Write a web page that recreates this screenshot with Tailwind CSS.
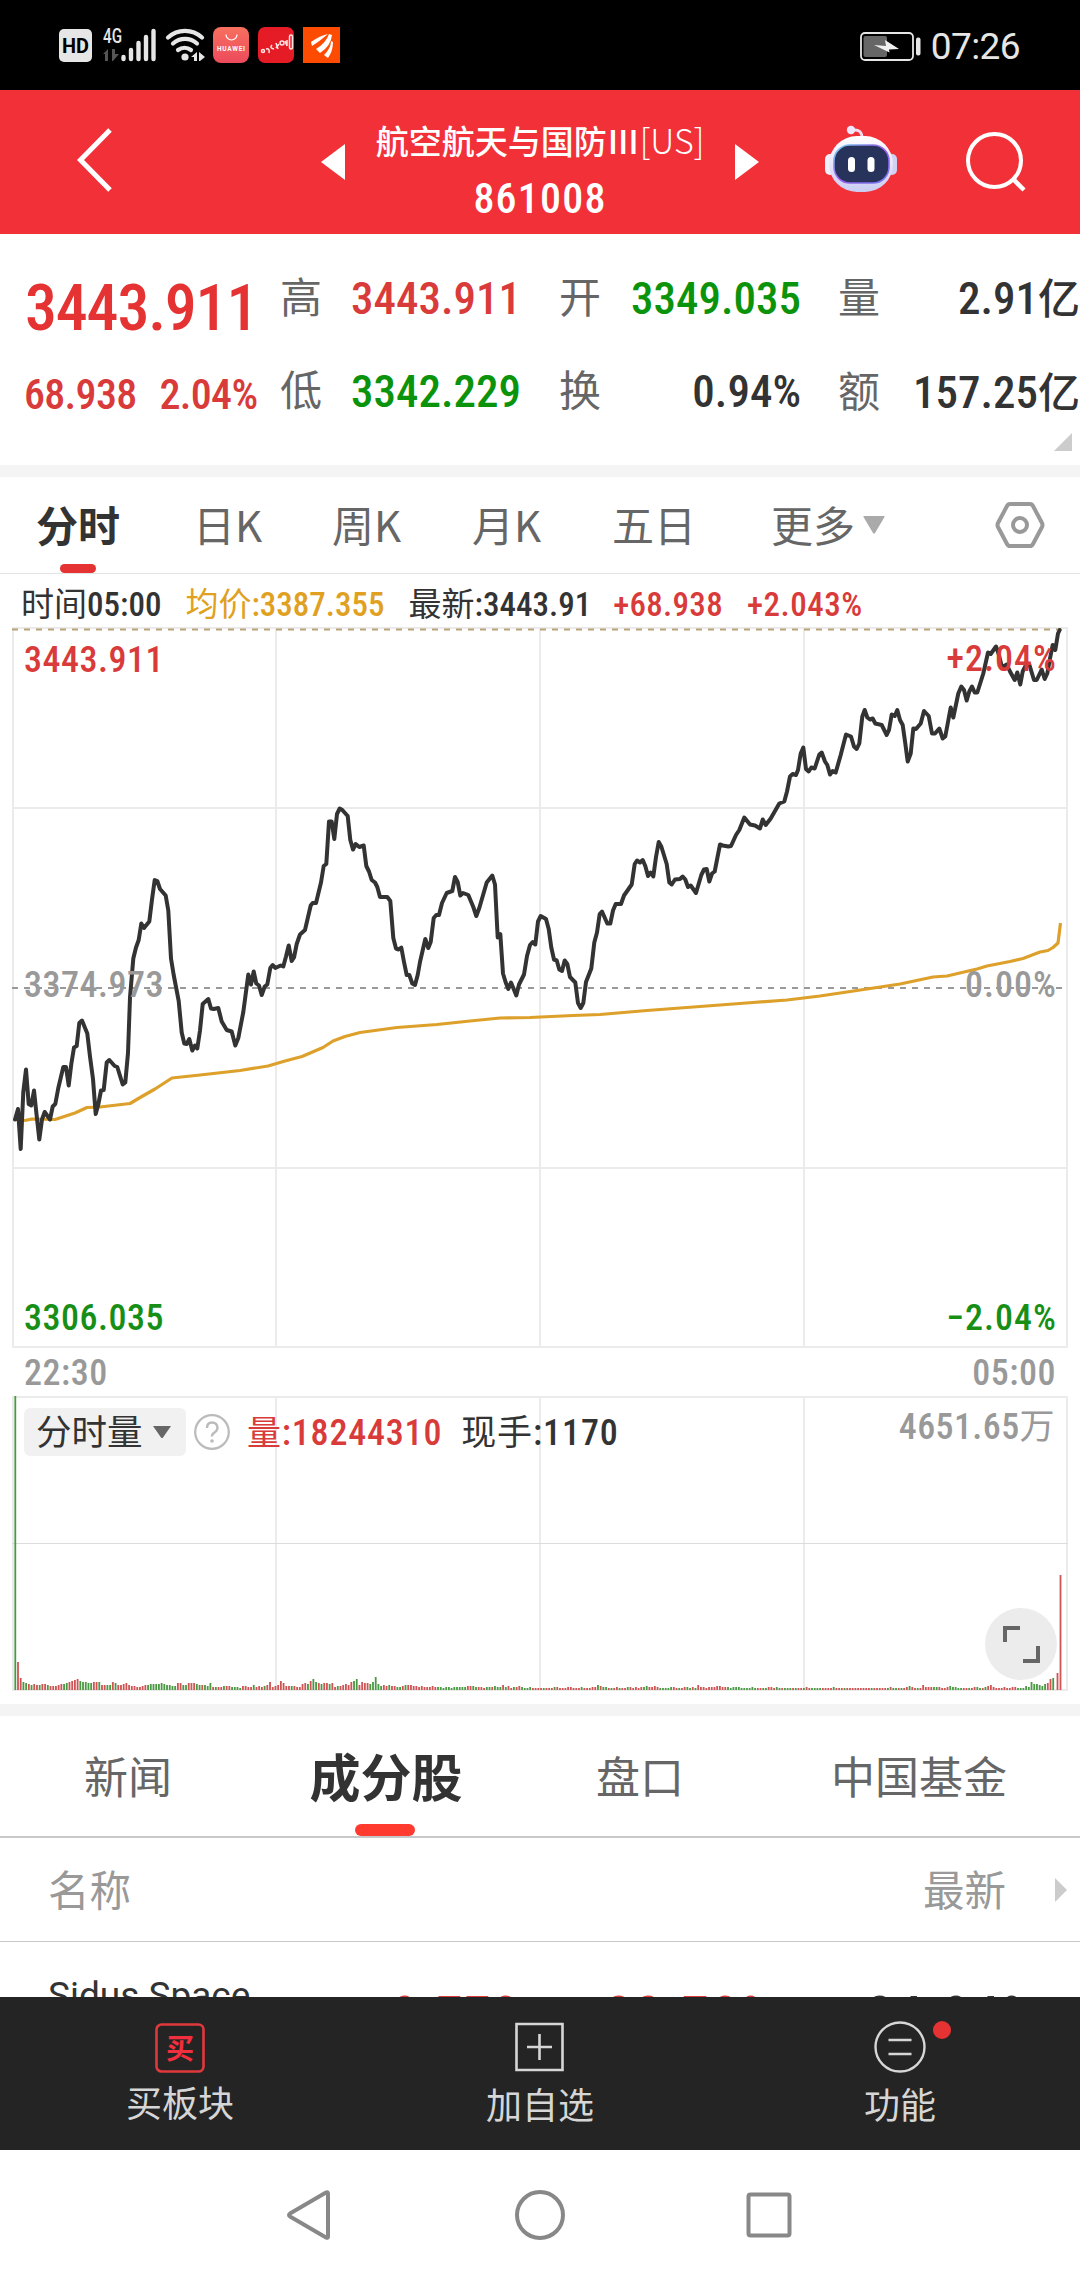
<!DOCTYPE html>
<html lang="zh-CN">
<head>
    <meta charset="UTF-8">
    <meta name="viewport" content="width=device-width, initial-scale=1.0">
    <title>航空航天与国防Ⅲ 861008</title>
    <script src="https://cdn.jsdelivr.net/npm/@tailwindcss/browser@4"></script>
</head>
<body class="w-[1080px] h-[2280px] overflow-hidden bg-white text-[#333] font-['Roboto','Noto_Sans_CJK_SC',sans-serif] whitespace-nowrap">

    <!-- status bar -->
    <div class="h-[90px] bg-black flex items-center">
        <svg class="w-[360px] h-[90px]" viewBox="0 0 360 90">
            <rect x="59" y="29" width="33" height="33" rx="5" fill="#e6e6e6"/>
            <text x="75.5" y="53" font-size="20" font-weight="700" text-anchor="middle" textLength="27" lengthAdjust="spacingAndGlyphs" fill="#000">HD</text>
            <text x="103" y="43" font-size="20" font-weight="500" textLength="19" lengthAdjust="spacingAndGlyphs" fill="#e6e6e6">4G</text>
            <path d="M103 54l5-5v12h-3v-7zM112 49h3v5h4l-6 7h-1z" fill="#555"/>
            <g stroke="#e6e6e6" stroke-width="4.4" stroke-linecap="round">
                <path d="M123.500 57v2M131 50v9M138.500 43v16M146 37v22M153.500 31v28"/>
            </g>
            <g fill="none" stroke="#e6e6e6" stroke-width="4.200" stroke-linecap="round">
                <path d="M168 37.500a25 25 0 0 1 34 0M173 43.500a18 18 0 0 1 24 0M178 50a11 11 0 0 1 13 0"/>
            </g>
            <circle cx="185" cy="57" r="3.600" fill="#e6e6e6"/>
            <path d="M191 57l6-5v9h-3v-4zM199 52l6 5-5 4h-1z" fill="#e6e6e6"/>
            <!-- app icons -->
            <linearGradient id="hw" x1="0" y1="0" x2="0" y2="1"><stop offset="0" stop-color="#f8705f"/><stop offset="1" stop-color="#ec4a5c"/></linearGradient>
            <rect x="213" y="27" width="36" height="36" rx="8" fill="url(#hw)"/>
            <path d="M226 34.500a5.500 5.500 0 0 0 11 0" fill="none" stroke="#fff" stroke-width="1.200"/>
            <text x="231" y="51" font-size="6.500" font-weight="700" text-anchor="middle" textLength="28" fill="#fff">HUAWEI</text>
            <rect x="258" y="27" width="36" height="36" rx="7" fill="#e51c26"/>
            <g fill="none" stroke="#ffe3e3" stroke-width="1.500">
                <circle cx="263" cy="51" r="1.500"/><path d="M266 49q4-1 3 4M272 45q-3 3 2 4M276 43l2 6M279 44l-3 4"/><circle cx="282" cy="43" r="2"/><path d="M285 41l2 5M287 40v6"/><rect x="289.500" y="35" width="3" height="14" rx="1.500"/>
            </g>
            <rect x="303" y="27" width="37" height="36" fill="#fd4b02"/>
            <path d="M311 42q10-7 17-8q-8 7-16 12zM316 49q10-6 13-15l3 1q-1 11-12 18zM324 55q7-7 7-14l2 1q0 9-5 16z" fill="#fff"/>
        </svg>
        <div class="ml-auto mr-[60px] flex items-center gap-[9px] pt-[3px]">
            <svg class="w-[62px] h-[32px]" viewBox="860 30 62 32">
                <rect x="861" y="32" width="52" height="27" rx="4" fill="none" stroke="#e6e6e6" stroke-width="1.800"/>
                <rect x="863.500" y="35" width="23.500" height="21" rx="2" fill="#666"/>
                <rect x="916" y="36.500" width="4.500" height="18" rx="2" fill="#e6e6e6"/>
                <path d="M874 44l12 1-1-6 14 9-10 .5.500 3z" fill="#f0f0f0"/>
            </svg>
            <span class="text-[37px] leading-[40px] text-[#e6e6e6] font-normal tracking-[-0.6px]">07:26</span>
        </div>
    </div>

    <!-- title bar -->
    <div class="h-[144px] bg-[#f23037] flex items-center text-white">
        <svg class="w-[36px] h-[66px] ml-[77px] mt-[-5px]" viewBox="0 0 36 66"><path d="M33 3L3.500 33 33 63" fill="none" stroke="#fff" stroke-width="5"/></svg>
        <svg class="w-[24px] h-[36px] ml-[208px]" viewBox="0 0 24 36"><path d="M24 0v36L0 18z" fill="#fff"/></svg>
        <div class="w-[390px] flex flex-col items-center pt-[20px]">
            <div class="text-[33px] leading-[50px] mt-[-2px] flex"><span class="font-medium">航空航天与国防Ⅲ</span><span class="font-['Noto_Sans_CJK_SC'] font-light text-[34px] mt-[-3px]">[US]</span></div>
            <div class="text-[42px] leading-[50px] mt-[6px] font-medium font-stretch-condensed tracking-[1.2px]">861008</div>
        </div>
        <svg class="w-[24px] h-[36px]" viewBox="0 0 24 36"><path d="M0 0v36l24-18z" fill="#fff"/></svg>
        <svg class="w-[74px] h-[70px] ml-[65px] mt-[-6px]" viewBox="824 124 74 70">
            <defs>
                <linearGradient id="head" x1="0" y1="0" x2="0" y2="1"><stop offset="0" stop-color="#fff"/><stop offset=".6" stop-color="#e4def8"/><stop offset="1" stop-color="#c9cdf2"/></linearGradient>
                <linearGradient id="rim" x1="0" y1="0" x2="1" y2="1"><stop offset="0" stop-color="#6fd3ee"/><stop offset=".5" stop-color="#9b59e8"/><stop offset="1" stop-color="#6f7cf0"/></linearGradient>
            </defs>
            <path d="M862 138q0-9-9-8" fill="none" stroke="#f3dcf0" stroke-width="3"/>
            <circle cx="851" cy="130" r="4.200" fill="#f1e6fb"/>
            <rect x="825" y="154" width="10" height="21" rx="5" fill="#eef0fc"/>
            <rect x="887" y="154" width="10" height="21" rx="5" fill="#cfd2f4"/>
            <rect x="829" y="136" width="64" height="56" rx="28" fill="url(#head)"/>
            <rect x="834" y="145" width="55" height="38" rx="16" fill="#27335b" stroke="url(#rim)" stroke-width="1.600"/>
            <rect x="848" y="157" width="7" height="15" rx="3.500" fill="#fff"/>
            <rect x="867.500" y="157" width="7" height="15" rx="3.500" fill="#fff"/>
        </svg>
        <svg class="w-[62px] h-[62px] ml-[67px] mt-[-1px]" viewBox="965 131 62 62">
            <circle cx="994.500" cy="160.500" r="26.500" fill="none" stroke="#fff" stroke-width="4"/>
            <path d="M1013 179l11 11" stroke="#fff" stroke-width="4.500"/>
        </svg>
    </div>

    <!-- quote -->
    <div class="h-[231px] flex relative font-medium font-stretch-condensed">
        <div class="w-[281px] pl-[25px] pt-[32px] text-[#e53232]">
            <div class="h-[86px] leading-[86px] text-[64px] tracking-[-1.2px]">3443.911</div>
            <div class="h-[86px] leading-[86px] text-[42px] text-[#d93a3a] tracking-[-0.7px] ml-[-1px] flex gap-[23px]"><span>68.938</span><span>2.04%</span></div>
        </div>
        <div class="w-[279px] pr-[39px] pt-[18px] text-[45px] leading-[93px]">
            <div class="flex justify-between"><span class="text-[42px] font-normal text-[#666] ml-[-1px]">高</span><span class="text-[#d93a3a]">3443.911</span></div>
            <div class="flex justify-between"><span class="text-[42px] font-normal text-[#666] ml-[-1px]">低</span><span class="text-[#0b930b]">3342.229</span></div>
        </div>
        <div class="w-[279px] pr-[38px] pt-[18px] text-[45px] leading-[93px]">
            <div class="flex justify-between"><span class="text-[42px] font-normal text-[#666] ml-[-1px]">开</span><span class="text-[#0b930b]">3349.035</span></div>
            <div class="flex justify-between"><span class="text-[42px] font-normal text-[#666] ml-[-1px]">换</span><span>0.94%</span></div>
        </div>
        <div class="w-[241px] pt-[18px] text-[45px] leading-[93px]">
            <div class="flex justify-between"><span class="text-[42px] font-normal text-[#666] ml-[-1px]">量</span><span>2.91<span class="text-[42px]">亿</span></span></div>
            <div class="flex justify-between"><span class="text-[42px] font-normal text-[#666] ml-[-1px]">额</span><span>157.25<span class="text-[42px]">亿</span></span></div>
        </div>
        <svg class="absolute right-[8px] bottom-[14px] w-[18px] h-[18px]" viewBox="0 0 18 18"><path d="M18 0v18H0z" fill="#ccc"/></svg>
    </div>
    <div class="h-[12px] bg-[#f4f4f4]"></div>

    <!-- period tabs -->
    <div class="h-[97px] border-b border-[#e4e4e4] flex items-center pl-[36px] pb-[3px] text-[42px] leading-[60px] text-[#666] font-['Noto_Sans_CJK_SC',sans-serif]">
        <div class="w-[157px] relative font-bold text-[#333]">分时<span class="absolute left-[24px] top-[70px] w-[36px] h-[9px] rounded-full bg-[#e53232]"></span></div>
        <div class="w-[139px]">日K</div>
        <div class="w-[140px]">周K</div>
        <div class="w-[140px]">月K</div>
        <div class="w-[159px]">五日</div>
        <div>更多</div>
        <svg class="w-[22px] h-[18px] ml-[8px] mt-[3px]" viewBox="0 0 22 18"><path d="M1 0h20q1 0 .5 1L12 17q-1 1.500-2 0L.5 1Q0 0 1 0z" fill="#aaa"/></svg>
        <svg class="w-[50px] h-[50px] ml-[110px] mt-[3px]" viewBox="0 0 50 50" fill="none" stroke="#999" stroke-width="4">
            <path d="M15 4h20q2 0 3 2l9 17q1 2 0 4l-9 17q-1 2-3 2H15q-2 0-3-2L3 27q-1-2 0-4l9-17q1-2 3-2z"/>
            <circle cx="25" cy="25" r="7"/>
        </svg>
    </div>

    <!-- price line -->
    <div class="h-[53px] pt-[8px] pl-[21px] flex gap-[24px] text-[33px] leading-[46px] font-medium font-stretch-condensed">
        <span><span class="font-normal">时间</span>05:00</span>
        <span class="text-[#e0a020]"><span class="font-normal">均价</span>:3387.355</span>
        <span class="mr-[-2px]"><span class="font-normal">最新</span>:3443.91</span>
        <span class="text-[#d93a3a] tracking-[0.3px]">+68.938</span>
        <span class="text-[#d93a3a] tracking-[0.5px]">+2.043%</span>
    </div>

    <!-- intraday chart -->
    <svg class="block w-[1080px] h-[767px] font-medium font-stretch-condensed tracking-[0.5px]" viewBox="0 627 1080 767" font-size="36">
        <g stroke="#ebebeb" stroke-width="2" fill="none">
            <path d="M12 628h1056M12 808h1056M12 1168h1056M12 1347h1056M13 627v721M276 627v721M540 627v721M804 627v721M1067 627v721"/>
        </g>
        <path d="M12 629.500h1049" stroke="#b8a27a" stroke-width="2" stroke-dasharray="6 6"/>
        <path d="M12 988h1051" stroke="#999" stroke-width="1.800" stroke-dasharray="6 6"/>
        <text x="24" y="671.500" fill="#d93a3a">3443.911</text>
        <polyline fill="none" stroke="#dda02a" stroke-width="3.200" stroke-linejoin="round" points="15,1119.5 25,1120.5 32,1119 55,1119.5 75,1113 87,1107.5 100,1107 130,1103.5 141,1097 155,1089 172,1078 200,1075 240,1070.5 268,1066 285,1061 302,1056.5 323,1047.5 333,1041 345,1036.5 360,1032.5 397,1027.5 437,1024.5 470,1021 500,1018 530,1017.5 573,1015.5 600,1014.5 647,1010.5 720,1005 753,1002.5 787,1000 820,996 867,989 900,984 933,977 947,976 977,969 987,966 1010,961.5 1023,958.5 1040,952 1048,950.5 1053,947.5 1058,943 1060.5,923"/>
        <polyline fill="none" stroke="#333" stroke-width="4" stroke-linejoin="round" stroke-linecap="round" points="15,1119.5 18,1109 20.7,1149 23.3,1092 26,1069.5 28.7,1104 31.3,1105.5 34,1090.5 36.7,1116 39.3,1139.5 42,1119.5 44.7,1112 50,1119.5 52.7,1106.5 55.3,1104 58.3,1088 63.3,1067 66,1067 68.7,1085.5 71.3,1064 74,1047.5 76.7,1046 79.3,1023 82,1020.5 87.3,1033.5 90,1056.5 93,1079 95.7,1114 98.3,1104.5 101,1090.5 103.7,1090 106.7,1062.5 109.3,1060 114.7,1066 117.3,1067 122.7,1084.5 125.3,1082.5 128,1053 130,997.5 133.3,958.5 136,947.5 138.7,940 141.3,923.5 144,928 149.3,921.5 152,899.5 154.7,880 157.3,881 160,889 165.7,895.5 168.3,910.5 171,958.5 173.7,975 178.7,1001 181.7,1032.5 184.3,1043.5 186.7,1044 189.3,1039 192.3,1050.5 195,1045.5 197.3,1048.5 200,1030.5 202.7,1004 208.3,999 211,1008.5 213.7,1009 218.3,1008 221.7,1021.5 226.7,1030 231.7,1031.5 235.3,1045.5 238.3,1038 243.3,1012 248.3,974.5 251,984.5 253.7,971.5 256.3,983.5 259,985.5 261.7,995 264.7,986.5 267.3,984.5 270.3,968 272.7,965 275.3,968 280.7,965.5 283.3,966.5 286,956.5 288.7,945.5 291.7,961 294,957.5 296.7,944 300,934.5 305,930 310.7,905.5 312.7,903 316,903 321,882.5 323.7,866 326.3,864 329,821.5 331.7,821.5 334.3,839 337,814 339.7,808.5 342.3,810 347.7,816 350.3,840 353,849.5 355.7,844 359.3,847 363.7,845.5 366.3,866 369,871.5 371.7,880 375,882.5 377.3,887 380,897 387.3,897 390.3,901 393.3,938 396,948.5 398.7,949.5 401.3,947.5 404,962 406.7,975 409.3,975 412.3,983.5 415,985 417.7,975 420,962 425.3,939 428.3,948 430.7,942 433.7,918 436.3,915 439,915 442,903 446.7,893 452.3,891 455,877 457.7,882 460.3,895.5 463,893 468.3,895 473.3,907 476.3,916 479.3,908 486.7,882.5 492.3,875.5 495,884.5 497.7,937.5 500.3,934 503,973.5 505.7,982.5 508.3,989 511,982.5 513.7,989 516.3,995.5 519,984.5 524,974.5 527,956 530,945 532.7,942 535.3,944.5 538,921.5 540.7,916 546,919 548.7,929 551.3,947.5 554,959.5 556.7,960.5 559.3,969.5 562,971 564.7,960.5 567.3,964 570,977 575.3,982.5 578,1003 580.7,1008 583.3,1003 586,982 591.3,968.5 594.3,942.5 597,932.5 599.7,914 602,911.5 607.3,923.5 610.3,923.5 613,910.5 615.7,904 621,904 624,895.5 631.7,884.5 634.7,864 637,860.5 640,862.5 642.7,860 645.3,866 648,876 650.7,872.5 653.3,876.5 656,857 658.7,842 661.3,846.5 666.7,864 669.3,882.5 671.7,884.5 675,879.5 680,879 682.7,876.5 685.3,879.5 688,887 690.7,885.5 696,893 701.3,875 704,869.5 706.7,869 709.3,881.5 712,873.5 714.7,871.5 720,844.5 722.7,845.5 728.3,846.5 731,846 736,835 739.3,830 744.3,817.5 750,824.5 755,825.5 760,828.5 762.7,819.5 765.7,825 770.7,818.5 779.3,803.5 784.3,801.5 787,791.5 790,776.5 792.7,774 796,775 798,770 800.7,753.5 803.3,747.5 806,769 808.7,771.5 811.3,767.5 814.7,768.5 819.3,754.5 821.7,752.5 825,761.5 827.3,765 830,774.5 832.7,771 835.7,772.5 840.7,755 846,734.5 851,736.5 854,746.5 856.7,749 859.3,743.5 862.3,716.5 864.7,710 867.3,717.5 870,719.5 872.7,718.5 875.3,723.5 881.7,725 886.7,735 889,730 891.7,714.5 894.7,716 897.3,710 900,720 902.7,725 905.3,743.5 907.7,761.5 910.7,753.5 913.3,728.5 916,729 920.7,723.5 924,711 928.7,716 932,733.5 935,733.5 939.3,728.5 942.7,738.5 945.3,736.5 950.7,707.5 953.3,717.5 958.3,693.5 961.3,686.5 964,690 966.7,700.5 969.3,691.5 972,686.5 974.7,692.5 977.3,692.5 983.3,673.5 988,652.5 990.7,654 996,646.5 998.7,654 1002,667.5 1006.7,664.5 1010,671.5 1014.7,680 1017.3,672.5 1020.3,684.5 1022.7,671.5 1026,665 1029.3,664.5 1034,680 1036.7,680 1041.7,669.5 1044.7,679 1047.3,673.5 1050,658.5 1052.7,645 1055.3,650 1058,633.5 1059.7,630"/>
        <text x="1057" y="671" text-anchor="end" letter-spacing="1" fill="#d93a3a">+2.04%</text>
        <text x="24" y="996.500" fill="#999">3374.973</text>
        <text x="1057" y="996.500" text-anchor="end" letter-spacing="1" fill="#999">0.00%</text>
        <text x="24" y="1330" fill="#178f17">3306.035</text>
        <text x="1057" y="1330" text-anchor="end" letter-spacing="1" fill="#178f17">−2.04%</text>
        <text x="24" y="1385" fill="#999">22:30</text>
        <text x="1056" y="1385" text-anchor="end" fill="#999">05:00</text>
    </svg>

    <!-- volume chart -->
    <div class="relative h-[310px] pt-[14px] font-medium font-stretch-condensed">
        <svg class="absolute left-0 top-0 w-[1080px] h-[300px]" viewBox="0 1394 1080 300">
            <g stroke="#ebebeb" stroke-width="2" fill="none">
                <path d="M12 1397h1056M13 1396v294M276 1396v294M540 1396v294M804 1396v294M1067 1396v294M12 1690h1056"/>
            </g>
            <path d="M12 1543.500h1056" stroke="#dcdcdc"/>
            <g id="bars"></g>
        </svg>
        <div class="relative flex items-start pl-[24px] pr-[25px] text-[36px] leading-[50px]">
            <div class="w-[162px] h-[48px] rounded-[6px] bg-[#f1f1f1] pl-[12px] pt-[2px] flex items-center font-normal text-[35.5px]">分时量
                <svg class="w-[18px] h-[12px] ml-[10px] mt-[-2px]" viewBox="0 0 18 12"><path d="M0 0h18l-8 11.500q-1 1-2 0z" fill="#666"/></svg>
            </div>
            <svg class="w-[36px] h-[36px] ml-[8px] mt-[6px]" viewBox="0 0 36 36">
                <circle cx="18" cy="18" r="16.800" fill="none" stroke="#bbb" stroke-width="2.200"/>
                <path d="M13 14q0-5.500 5-5.500t5.500 5q0 3-3 5t-2.500 4" fill="none" stroke="#bbb" stroke-width="2.400"/>
                <circle cx="18" cy="27" r="1.800" fill="#bbb"/>
            </svg>
            <span class="ml-[17px] text-[#d93a3a] tracking-[0.8px]"><span class="font-normal text-[34px]">量</span>:18244310</span>
            <span class="ml-[19px] tracking-[0.9px]"><span class="font-normal text-[35px]">现手</span>:1170</span>
            <span class="ml-auto mt-[-6px] text-[#999] tracking-[0.4px]">4651.65<span class="font-normal text-[35px]">万</span></span>
        </div>
        <svg class="absolute left-[985px] top-[214px] w-[72px] h-[72px]" viewBox="0 0 72 72">
            <circle cx="36" cy="36" r="36" fill="#ececec"/>
            <path d="M20 34V20h15M38 53h15V38" fill="none" stroke="#666" stroke-width="4"/>
        </svg>
    </div>
    <div class="h-[12px] bg-[#f4f4f4]"></div>

    <!-- section tabs -->
    <div class="h-[122px] border-b-2 border-[#c8c8c8] relative flex items-center pb-[2px] text-[44px] leading-[60px] text-[#666] font-['Noto_Sans_CJK_SC',sans-serif]">
        <div class="w-[256px] text-center">新闻</div>
        <div class="w-[260px] text-center text-[51px] font-bold text-[#333]">成分股</div>
        <div class="w-[248px] text-center">盘口</div>
        <div class="w-[310px] text-center">中国基金</div>
        <div class="absolute left-[355px] bottom-0 w-[60px] h-[12px] rounded-full bg-[#ff3b30]"></div>
    </div>
    <div class="h-[104px] border-b border-[#c8c8c8] flex items-center pl-[48px] text-[41.5px] leading-[60px] text-[#999]">
        <span class="mt-[5px]">名称</span>
        <span class="mt-[5px] ml-auto mr-[49px]">最新</span>
        <svg class="w-[12px] h-[24px] mr-[13px]" viewBox="0 0 12 24"><path d="M0 0v24l12-12z" fill="#ccc"/></svg>
    </div>
    <!-- first stock, cut off by the toolbar -->
    <div class="h-[55px] overflow-hidden relative pl-[48px] flex items-start">
        <span class="w-[344px] text-[37px] leading-[44px] pt-[32px]">Sidus Space</span>
        <span class="w-[213px] text-[52px] leading-[60px] pt-[44px] font-medium font-stretch-condensed tracking-[2px] text-[#d93a3a]">9.770</span>
        <span class="w-[261px] text-[54px] leading-[60px] pt-[44px] font-medium font-stretch-condensed tracking-[2.6px] text-[#d93a3a]">22.70%</span>
        <span class="text-[54px] leading-[60px] pt-[44px] font-medium font-stretch-condensed tracking-[2.6px]">24.94%</span>
    </div>

    <!-- toolbar -->
    <div class="h-[153px] bg-[#242424] grid grid-cols-3 text-[36px] leading-[44px] text-[#d6d6d6] text-center">
        <div class="pt-[26px]">
            <svg class="mx-auto w-[50px] h-[50px]" viewBox="0 0 50 50">
                <rect x="1.500" y="1.500" width="47" height="47" rx="5" fill="none" stroke="#e0393c" stroke-width="2.600"/>
                <text x="25" y="35.500" font-size="28" font-weight="700" text-anchor="middle" fill="#f22f3e">买</text>
            </svg>
            <div class="mt-[10px]">买板块</div>
        </div>
        <div class="pt-[25px]">
            <svg class="mx-auto w-[50px] h-[50px]" viewBox="0 0 50 50" fill="none" stroke="#d6d6d6" stroke-width="2.600">
                <path d="M1.500 2h46v46h-46zM24.500 12v26M12 25h25"/>
            </svg>
            <div class="mt-[13px]">加自选</div>
        </div>
        <div class="pt-[24px]">
            <svg class="mx-auto w-[100px] h-[52px] overflow-visible" viewBox="0 0 100 52">
                <circle cx="50" cy="26" r="24.500" fill="none" stroke="#d6d6d6" stroke-width="2.400"/>
                <path d="M38.500 19h23M38.500 33h23" stroke="#d6d6d6" stroke-width="2.600"/>
                <circle cx="92" cy="9" r="9" fill="#e53232"/>
            </svg>
            <div class="mt-[12px]">功能</div>
        </div>
    </div>

    <!-- system navigation -->
    <div class="h-[130px] flex items-center justify-center">
        <svg class="w-[520px] h-[60px]" viewBox="280 2185 520 60" fill="none" stroke="#888" stroke-width="4" stroke-linejoin="round">
            <path d="M326 2192.500q2-1 2 1v43q0 2-2 1l-36-21q-2-1.500 0-3z"/>
            <circle cx="540" cy="2215" r="23"/>
            <rect x="748.500" y="2194.500" width="41" height="41" rx="2"/>
        </svg>
    </div>

    <script>
        // bar heights in px, one hex digit per minute, after the two opening bars
        const heights =
            "c8765655665444566789ab9887788855558755675443345566667655447755777655547333344433324433534345834597444433676" +
            "9b876776734456589b587768d6454544334555443433343332332333334443332333433534233432232222222233222332223222" +
            "3354332223222332323343343222233222332325332333443332333222232222233232222222222322222222232222222222222222" +
            "2222322222343222533333322343322222233223453222322332224332222333343222333332222322332333333586654467bc";
        // runs of falling (g) and rising (r) minutes
        const runs = "rggrgrrgrrgrrrrrggrrrrgggggrrgrrggrgrrrrrrrrrrrgggggggggggrrggrrrggrgggrgrrgrrggggrrrrgrrrgrrrrrrrrrgrrrrrg";
        const bars = document.getElementById("bars");
        const baseY = 1690;
        const step = 2.71;

        const addBar = (x, h, color) => {
            const rect = document.createElementNS("http://www.w3.org/2000/svg", "rect");
            rect.setAttribute("x", x - 0.9);
            rect.setAttribute("y", baseY - h);
            rect.setAttribute("width", 1.8);
            rect.setAttribute("height", h);
            rect.setAttribute("fill", color);
            bars.appendChild(rect);
        };

        const green = "#4a9a43";
        const red = "#cf5454";
        addBar(15.3, 294, green);
        addBar(18, 28, red);
        const count = Math.floor((1057 - 20.7) / step);
        const tail = [8, 6, 6, 5, 4, 6, 7, 11, 12];
        for (let i = 0; i < count; i++) {
            let h = parseInt(heights[i] || "2", 16);
            if (i >= count - tail.length) h = tail[i - count + tail.length];
            addBar(20.7 + i * step, h, runs[i % runs.length] === "g" ? green : red);
        }
        addBar(1057.5, 17, red);
        addBar(1060.5, 115, red);
    </script>
</body>
</html>
